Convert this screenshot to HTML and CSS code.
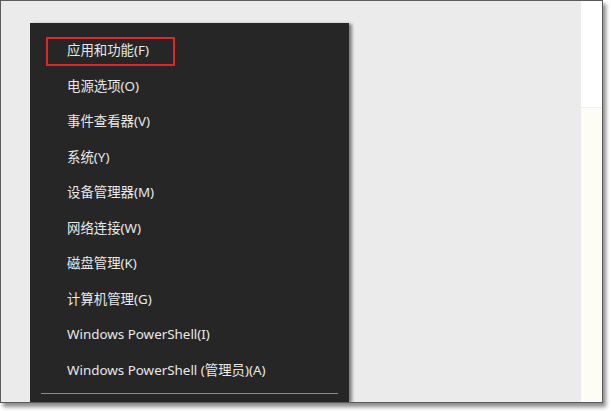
FILE: index.html
```html
<!DOCTYPE html>
<html lang="zh">
<head>
<meta charset="utf-8">
<link rel="stylesheet" href="styles.css">
</head>
<body>
<div class="frame">
  <div class="desk">
    <div class="menu">
      <ul class="items">
        <li class="item">应用和功能(F)</li>
        <li class="item">电源选项(O)</li>
        <li class="item">事件查看器(V)</li>
        <li class="item">系统(Y)</li>
        <li class="item">设备管理器(M)</li>
        <li class="item">网络连接(W)</li>
        <li class="item">磁盘管理(K)</li>
        <li class="item">计算机管理(G)</li>
        <li class="item">Windows PowerShell(I)</li>
        <li class="item">Windows PowerShell (管理员)(A)</li>
      </ul>
      <div class="sep"></div>
      <div class="highlight"></div>
    </div>
  </div>
  <div class="side">
    <div class="side-top"></div>
    <div class="side-bottom"></div>
  </div>
</div>
</body>
</html>
```
FILE: styles.css
```css
html, body {
  margin: 0;
  padding: 0;
  background: #ffffff;
}
body {
  width: 611px;
  height: 411px;
  overflow: hidden;
  font-family: "Noto Sans", "Noto Sans CJK SC", sans-serif;
}
.frame {
  box-sizing: border-box;
  width: 603px;
  height: 403px;
  border: 1px solid #5b5b5b;
  display: flex;
  box-shadow: 3px 4px 4px rgba(0, 0, 0, 0.45);
  overflow: hidden;
}
.desk {
  flex: 0 0 580px;
  background: #ebebeb;
  padding: 22px 0 0 29px;
  box-sizing: border-box;
}
.menu {
  position: relative;
  width: 319px;
  height: 100%;
  background: #262626;
  box-shadow: 3px 1px 3px rgba(0, 0, 0, 0.45);
  padding-top: 10px;
  box-sizing: border-box;
}
.items {
  list-style: none;
  margin: 0;
  padding: 0;
}
.item {
  height: 35.5px;
  line-height: 35.5px;
  padding-left: 37px;
  color: #e8e8e8;
  font-size: 13.4px;
  white-space: nowrap;
}
.sep {
  margin: 5px 0 0 11px;
  width: 297px;
  height: 1px;
  background: #8a8a8a;
}
.highlight {
  position: absolute;
  left: 16px;
  top: 14px;
  width: 129px;
  height: 29px;
  border: 2px solid #e0262b;
  box-sizing: border-box;
}
.side {
  flex: 1;
  display: flex;
  flex-direction: column;
}
.side-top {
  height: 106px;
  background: #ffffff;
  border-bottom: 1px solid #f0f0ea;
}
.side-bottom {
  flex: 1;
  background: #fdfdf5;
}
```
